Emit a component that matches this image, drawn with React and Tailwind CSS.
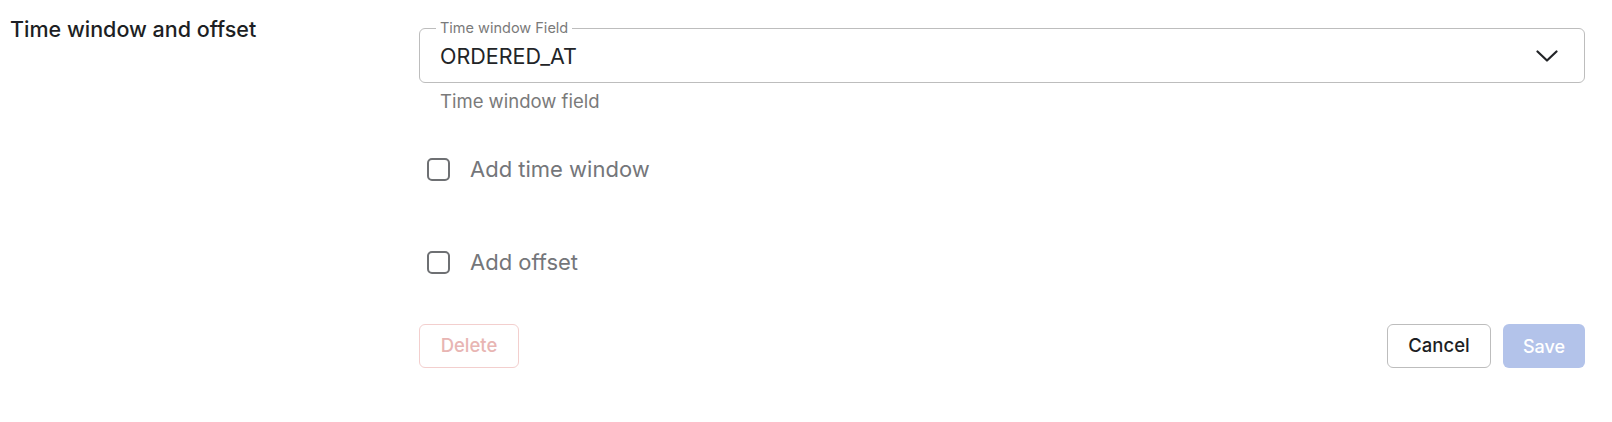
const font = { fontFamily: 'Inter, "Noto Sans", sans-serif' };

const Checkbox = ({ label }) => (
    <label className="flex items-center h-[24px] cursor-pointer">
        <span className="ml-[8px] h-[23px] w-[23px] shrink-0 rounded-[5px] border-2 border-[#6e7073] bg-white" />
        <span className="ml-[20px] text-[22px] leading-[24px] text-[#74767a]">{label}</span>
    </label>
);

export default function App() {
    return (
        <div style={font} className="w-[1612px] h-[422px] bg-white flex">
            {/* Section title */}
            <div className="w-[419px] shrink-0 pl-[10px] pt-[15px]">
                <h3 className="text-[21.5px] font-medium text-[#1d1f24] leading-[28px]">Time window and offset</h3>
            </div>

            {/* Form */}
            <div className="w-[1166px] pt-[28px] flex flex-col">
                <div className="relative h-[55px] rounded-[6px] border border-[#bdbdbd] flex items-center pl-[20px] pr-[26px]">
                    <span className="absolute -top-[10px] left-[16px] px-[4px] bg-white text-[14.5px] leading-[18px] text-[#7a7a7a]">
                        Time window Field
                    </span>
                    <span className="flex-1 text-[21.5px] leading-[26px] text-[#222427] pt-[1px]">ORDERED_AT</span>
                    <svg width="22" height="12" viewBox="0 0 22 12" fill="none">
                        <path d="M1.5 1.5 L11 10.5 L20.5 1.5" stroke="#222427" strokeWidth="2.2" strokeLinecap="round" strokeLinejoin="round" />
                    </svg>
                </div>
                <p className="pl-[21px] mt-[7px] text-[18.5px] leading-[22px] text-[#7a7a7a]">Time window field</p>

                <div className="mt-[45px] flex flex-col gap-[69px]">
                    <Checkbox label="Add time window" />
                    <Checkbox label="Add offset" />
                </div>

                <div className="mt-[50px] flex items-center">
                    <button className="h-[44px] w-[100px] rounded-[6px] border border-[#f3cfce] text-[18.5px] font-medium text-[#e8b5b3]">
                        Delete
                    </button>
                    <div className="ml-auto flex gap-[12px]">
                        <button className="h-[44px] w-[104px] rounded-[6px] border border-[#bdbdbd] text-[18.5px] font-medium text-[#1d1f24]">
                            Cancel
                        </button>
                        <button className="h-[44px] w-[82px] rounded-[6px] bg-[#b3c3ea] text-[18px] font-medium text-white">
                            Save
                        </button>
                    </div>
                </div>
            </div>
        </div>
    );
}
